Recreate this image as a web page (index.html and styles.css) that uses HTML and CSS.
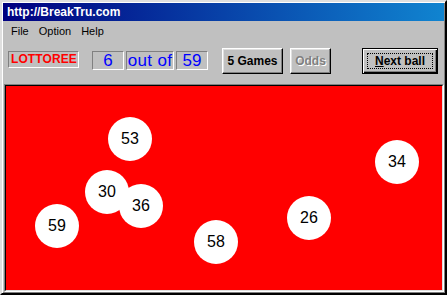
FILE: index.html
```html
<!DOCTYPE html>
<html>
<head>
<meta charset="utf-8">
<link rel="stylesheet" href="styles.css">
</head>
<body>
<div class="window">
  <div class="titlebar">http://BreakTru.com</div>
  <div class="menubar">
    <span class="menu-item">File</span>
    <span class="menu-item">Option</span>
    <span class="menu-item">Help</span>
  </div>
  <div class="toolbar">
    <div class="brand">LOTTOREE</div>
    <div class="counts">
      <div class="count count-num">6</div>
      <div class="count count-text">out of</div>
      <div class="count count-num">59</div>
    </div>
    <button class="btn btn-games">5 Games</button>
    <button class="btn btn-odds" disabled>Odds</button>
    <button class="btn btn-next"><span class="ul">N</span>ext ball</button>
  </div>
  <div class="frame">
    <div class="canvas">
      <div class="ball b53">53</div>
      <div class="ball b34">34</div>
      <div class="ball b30">30</div>
      <div class="ball b36">36</div>
      <div class="ball b59">59</div>
      <div class="ball b58">58</div>
      <div class="ball b26">26</div>
    </div>
  </div>
</div>
</body>
</html>
```

FILE: styles.css
```css
* { box-sizing: border-box; }
html, body {
  margin: 0;
  padding: 0;
  background: #c0c0c0;
}
.window {
  width: 447px;
  height: 295px;
  background: #c0c0c0;
  border: 2px solid;
  border-color: #dfdfdf #000 #000 #dfdfdf;
  box-shadow: inset 1px 1px #fff, inset -1px -1px #808080;
  padding: 1px;
  display: flex;
  flex-direction: column;
  font-family: "Liberation Sans", Arial, sans-serif;
}
.titlebar {
  height: 18px;
  background: linear-gradient(to right, #000080, #1084d0);
  color: #fff;
  font-weight: bold;
  font-size: 12px;
  line-height: 18px;
  padding-left: 4px;
}
.menubar {
  height: 20px;
  display: flex;
  align-items: center;
  padding-left: 3px;
  font-size: 11px;
  color: #000;
}
.menu-item {
  padding: 0 5px;
}
.toolbar {
  height: 43px;
  display: flex;
  align-items: flex-start;
  padding-left: 5px;
}
.brand {
  margin-top: 10px;
  width: 71px;
  height: 17px;
  border: 1px solid;
  border-color: #808080 #fff #fff #808080;
  color: #ff0000;
  font-weight: bold;
  font-size: 12px;
  line-height: 15px;
  padding-left: 2px;
  letter-spacing: 0.1px;
}
.counts {
  margin-top: 10px;
  margin-left: 13px;
  display: flex;
  gap: 2px;
}
.count {
  height: 19px;
  border: 1px solid;
  border-color: #808080 #fff #fff #808080;
  color: #0000ff;
  font-size: 17px;
  line-height: 17px;
  text-align: center;
}
.count-num { width: 32px; }
.count-text { width: 48px; letter-spacing: 0.3px; white-space: nowrap; }
.btn {
  margin-top: 7px;
  height: 26px;
  padding: 0;
  background: #c0c0c0;
  border: 1px solid;
  border-color: #fff #000 #000 #fff;
  box-shadow: inset -1px -1px #808080, inset 1px 1px #dfdfdf;
  font-family: "Liberation Sans", Arial, sans-serif;
  font-weight: bold;
  font-size: 12px;
  color: #000;
}
.btn-games {
  width: 61px;
  margin-left: 14px;
}
.btn-odds {
  width: 41px;
  margin-left: 7px;
  color: #808080;
  text-shadow: 1px 1px #fff;
}
.btn-next {
  position: relative;
  width: 76px;
  margin-left: 31px;
  border: 1px solid #000;
  box-shadow: inset 1px 1px #fff, inset -1px -1px #000, inset -2px -2px #808080;
}
.btn-next::after {
  content: "";
  position: absolute;
  left: 4px;
  top: 4px;
  right: 4px;
  bottom: 4px;
  border: 1px dotted #000;
}
.ul { text-decoration: underline; }
.frame {
  margin-left: 1px;
  width: 440px;
  height: 208px;
  border: 1px solid;
  border-color: #808080 #fff #fff #808080;
}
.canvas {
  position: relative;
  width: 100%;
  height: 100%;
  background: #ff0000;
  border: 1px solid;
  border-color: #000 #dfdfdf #dfdfdf #000;
  overflow: hidden;
}
.ball {
  position: absolute;
  width: 44px;
  height: 44px;
  border-radius: 50%;
  background: #fff;
  color: #000;
  font-size: 16px;
  line-height: 44px;
  text-align: center;
}
.b53 { left: 102px; top: 31px; }
.b34 { left: 369px; top: 54px; }
.b30 { left: 79px; top: 84px; }
.b36 { left: 113px; top: 98px; }
.b59 { left: 29px; top: 118px; }
.b58 { left: 188px; top: 134px; }
.b26 { left: 281px; top: 110px; }
```
